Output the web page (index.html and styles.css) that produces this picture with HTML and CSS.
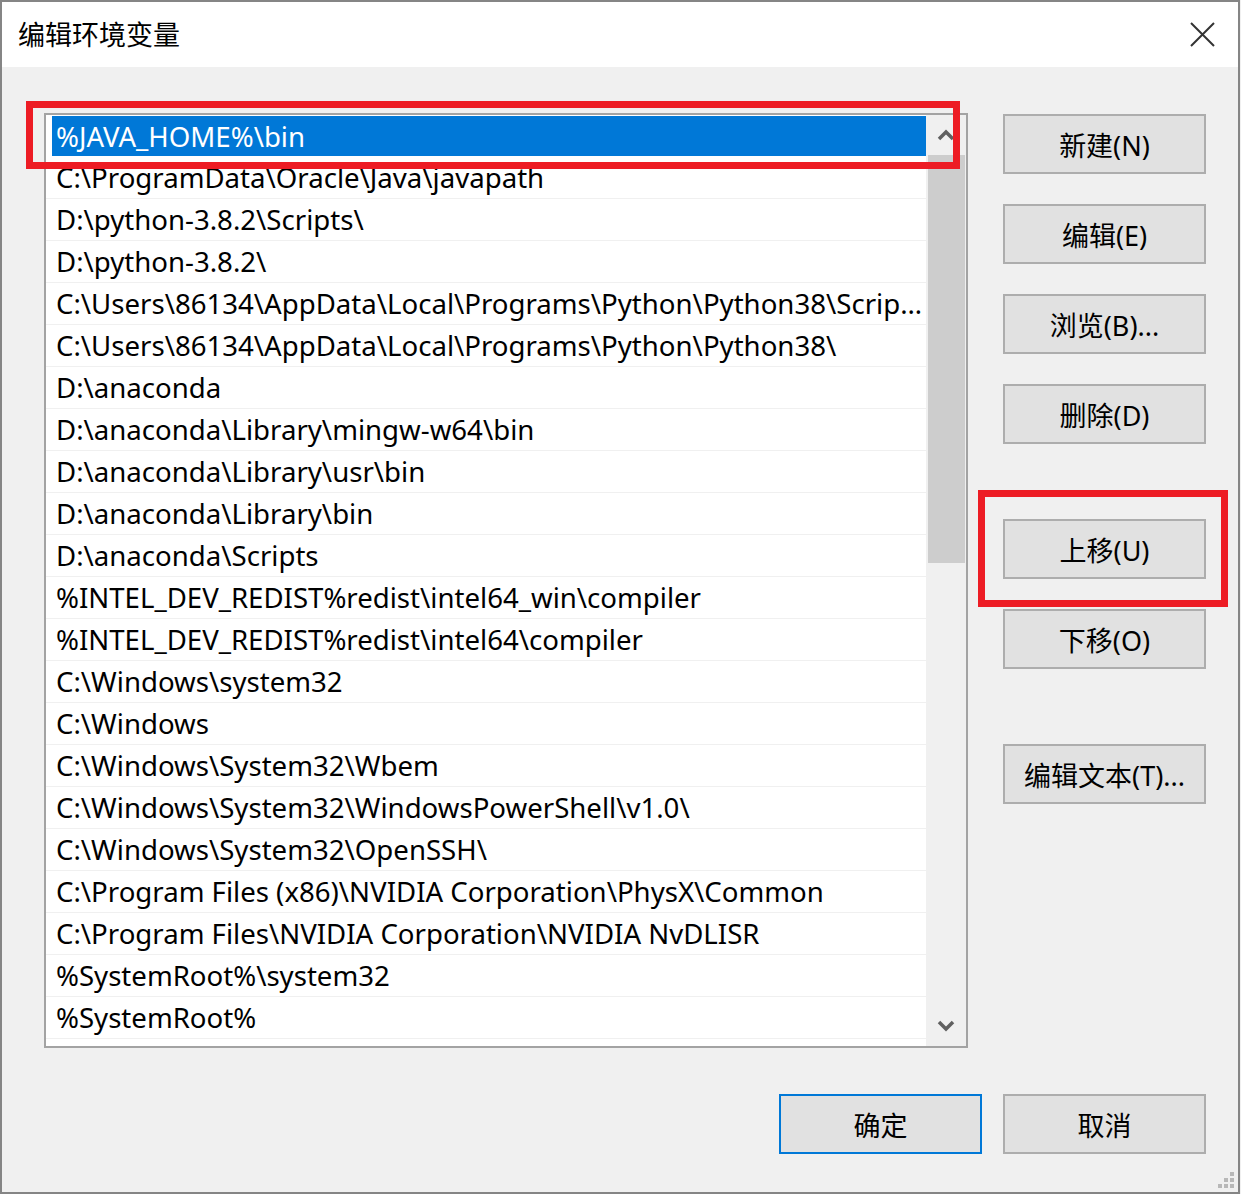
FILE: index.html
```html
<!DOCTYPE html>
<html lang="zh-CN">

<head>
    <meta charset="UTF-8">
    <title>编辑环境变量</title>
    <link rel="stylesheet" href="styles.css">
</head>

<body>
    <div class="window">
        <div class="titlebar">
            <span class="title">编辑环境变量</span>
            <svg class="close" width="25" height="25" viewBox="0 0 25 25">
                <path d="M1 1 L24 24 M24 1 L1 24" stroke="#333" stroke-width="2" fill="none" />
            </svg>
        </div>

        <div class="main">
            <div class="top">
                <div class="listbox">
                    <div class="rows">
                        <div class="row selected">%JAVA_HOME%\bin</div>
                        <div class="row">C:\ProgramData\Oracle\Java\javapath</div>
                        <div class="row">D:\python-3.8.2\Scripts\</div>
                        <div class="row">D:\python-3.8.2\</div>
                        <div class="row">C:\Users\86134\AppData\Local\Programs\Python\Python38\Scrip...</div>
                        <div class="row">C:\Users\86134\AppData\Local\Programs\Python\Python38\</div>
                        <div class="row">D:\anaconda</div>
                        <div class="row">D:\anaconda\Library\mingw-w64\bin</div>
                        <div class="row">D:\anaconda\Library\usr\bin</div>
                        <div class="row">D:\anaconda\Library\bin</div>
                        <div class="row">D:\anaconda\Scripts</div>
                        <div class="row">%INTEL_DEV_REDIST%redist\intel64_win\compiler</div>
                        <div class="row">%INTEL_DEV_REDIST%redist\intel64\compiler</div>
                        <div class="row">C:\Windows\system32</div>
                        <div class="row">C:\Windows</div>
                        <div class="row">C:\Windows\System32\Wbem</div>
                        <div class="row">C:\Windows\System32\WindowsPowerShell\v1.0\</div>
                        <div class="row">C:\Windows\System32\OpenSSH\</div>
                        <div class="row">C:\Program Files (x86)\NVIDIA Corporation\PhysX\Common</div>
                        <div class="row">C:\Program Files\NVIDIA Corporation\NVIDIA NvDLISR</div>
                        <div class="row">%SystemRoot%\system32</div>
                        <div class="row">%SystemRoot%</div>
                    </div>

                    <div class="scrollbar">
                        <div class="arrow">
                            <svg width="18" height="14" viewBox="0 0 18 14">
                                <path d="M2 11 L9 4 L16 11" stroke="#606060" stroke-width="3.5" fill="none" />
                            </svg>
                        </div>
                        <div class="thumb"></div>
                        <div class="track"></div>
                        <div class="arrow">
                            <svg width="18" height="14" viewBox="0 0 18 14">
                                <path d="M2 3 L9 10 L16 3" stroke="#606060" stroke-width="3.5" fill="none" />
                            </svg>
                        </div>
                    </div>
                </div>

                <div class="side">
                    <button class="btn">新建(N)</button>
                    <button class="btn">编辑(E)</button>
                    <button class="btn">浏览(B)...</button>
                    <button class="btn">删除(D)</button>
                    <button class="btn group-start">上移(U)</button>
                    <button class="btn">下移(O)</button>
                    <button class="btn group-start">编辑文本(T)...</button>
                </div>
            </div>

            <div class="footer">
                <button class="btn default">确定</button>
                <button class="btn">取消</button>
            </div>
        </div>

        <!-- red annotation boxes -->
        <div class="mark mark-list"></div>
        <div class="mark mark-up"></div>

        <svg class="grip" width="18" height="18" viewBox="0 0 18 18">
            <rect x="12" y="0" width="4" height="4" fill="#b8b8b8" />
            <rect x="6" y="6" width="4" height="4" fill="#b8b8b8" />
            <rect x="12" y="6" width="4" height="4" fill="#b8b8b8" />
            <rect x="0" y="12" width="4" height="4" fill="#b8b8b8" />
            <rect x="6" y="12" width="4" height="4" fill="#b8b8b8" />
            <rect x="12" y="12" width="4" height="4" fill="#b8b8b8" />
        </svg>
    </div>
</body>

</html>
```

FILE: styles.css
```css
body {
    margin: 0;
    background: #f0f0f0;
    font-family: "Noto Sans", "Noto Sans CJK SC", sans-serif;
}

.window {
    position: relative;
    box-sizing: border-box;
    width: 1240px;
    height: 1194px;
    border: 2px solid #858585;
    background: #f0f0f0;
    display: flex;
    flex-direction: column;
}

.titlebar {
    height: 65px;
    background: #fff;
    display: flex;
    align-items: center;
    justify-content: space-between;
    padding: 0 23px 0 16px;
}

.title {
    font-family: "Noto Sans CJK SC", sans-serif;
    font-size: 27px;
    color: #000;
    margin-top: -2px;
}

.close {
    margin-top: -1px;
}

.main {
    flex: 1;
    display: flex;
    flex-direction: column;
    padding: 46px 32px 0 42px;
}

.top {
    display: flex;
    gap: 35px;
}

.listbox {
    box-sizing: border-box;
    width: 924px;
    height: 935px;
    border: 2px solid #a3a3a3;
    background: #fff;
    display: flex;
}

.rows {
    flex: 1;
    min-width: 0;
}

.row {
    box-sizing: border-box;
    height: 42px;
    line-height: 41px;
    padding: 0 4px 0 10px;
    border-bottom: 1px solid #f0f0f0;
    font-size: 27.6px;
    color: #000;
    white-space: nowrap;
    overflow: hidden;
    text-overflow: ellipsis;
}

.row.selected {
    height: 40px;
    line-height: 40px;
    margin: 1px 0 1px 6px;
    padding-left: 4px;
    border-bottom: none;
    background: #0078d7;
    color: #fff;
}

.scrollbar {
    width: 40px;
    background: #f0f0f0;
    display: flex;
    flex-direction: column;
}

.arrow {
    height: 40px;
    display: flex;
    align-items: center;
    justify-content: center;
}

.thumb {
    height: 408px;
    margin: 0 1px 0 2px;
    background: #cdcdcd;
}

.track {
    flex: 1;
}

.side {
    display: flex;
    flex-direction: column;
    gap: 30px;
    padding-top: 1px;
}

.btn {
    box-sizing: border-box;
    width: 203px;
    height: 60px;
    border: 2px solid #adadad;
    background: #e1e1e1;
    font-family: "Noto Sans", "Noto Sans CJK SC", sans-serif;
    font-size: 27px;
    color: #000;
    padding: 0;
}

.group-start {
    margin-top: 45px;
}

.footer {
    display: flex;
    justify-content: flex-end;
    gap: 21px;
    margin-top: 46px;
}

.btn.default {
    border-color: #0078d7;
}

.mark {
    position: absolute;
    box-sizing: border-box;
    border: 7px solid #ed1c24;
}

.mark-list {
    left: 24px;
    top: 99px;
    width: 934px;
    height: 68px;
}

.mark-up {
    left: 976px;
    top: 488px;
    width: 250px;
    height: 117px;
}

.grip {
    position: absolute;
    right: 2px;
    bottom: 2px;
}
```
